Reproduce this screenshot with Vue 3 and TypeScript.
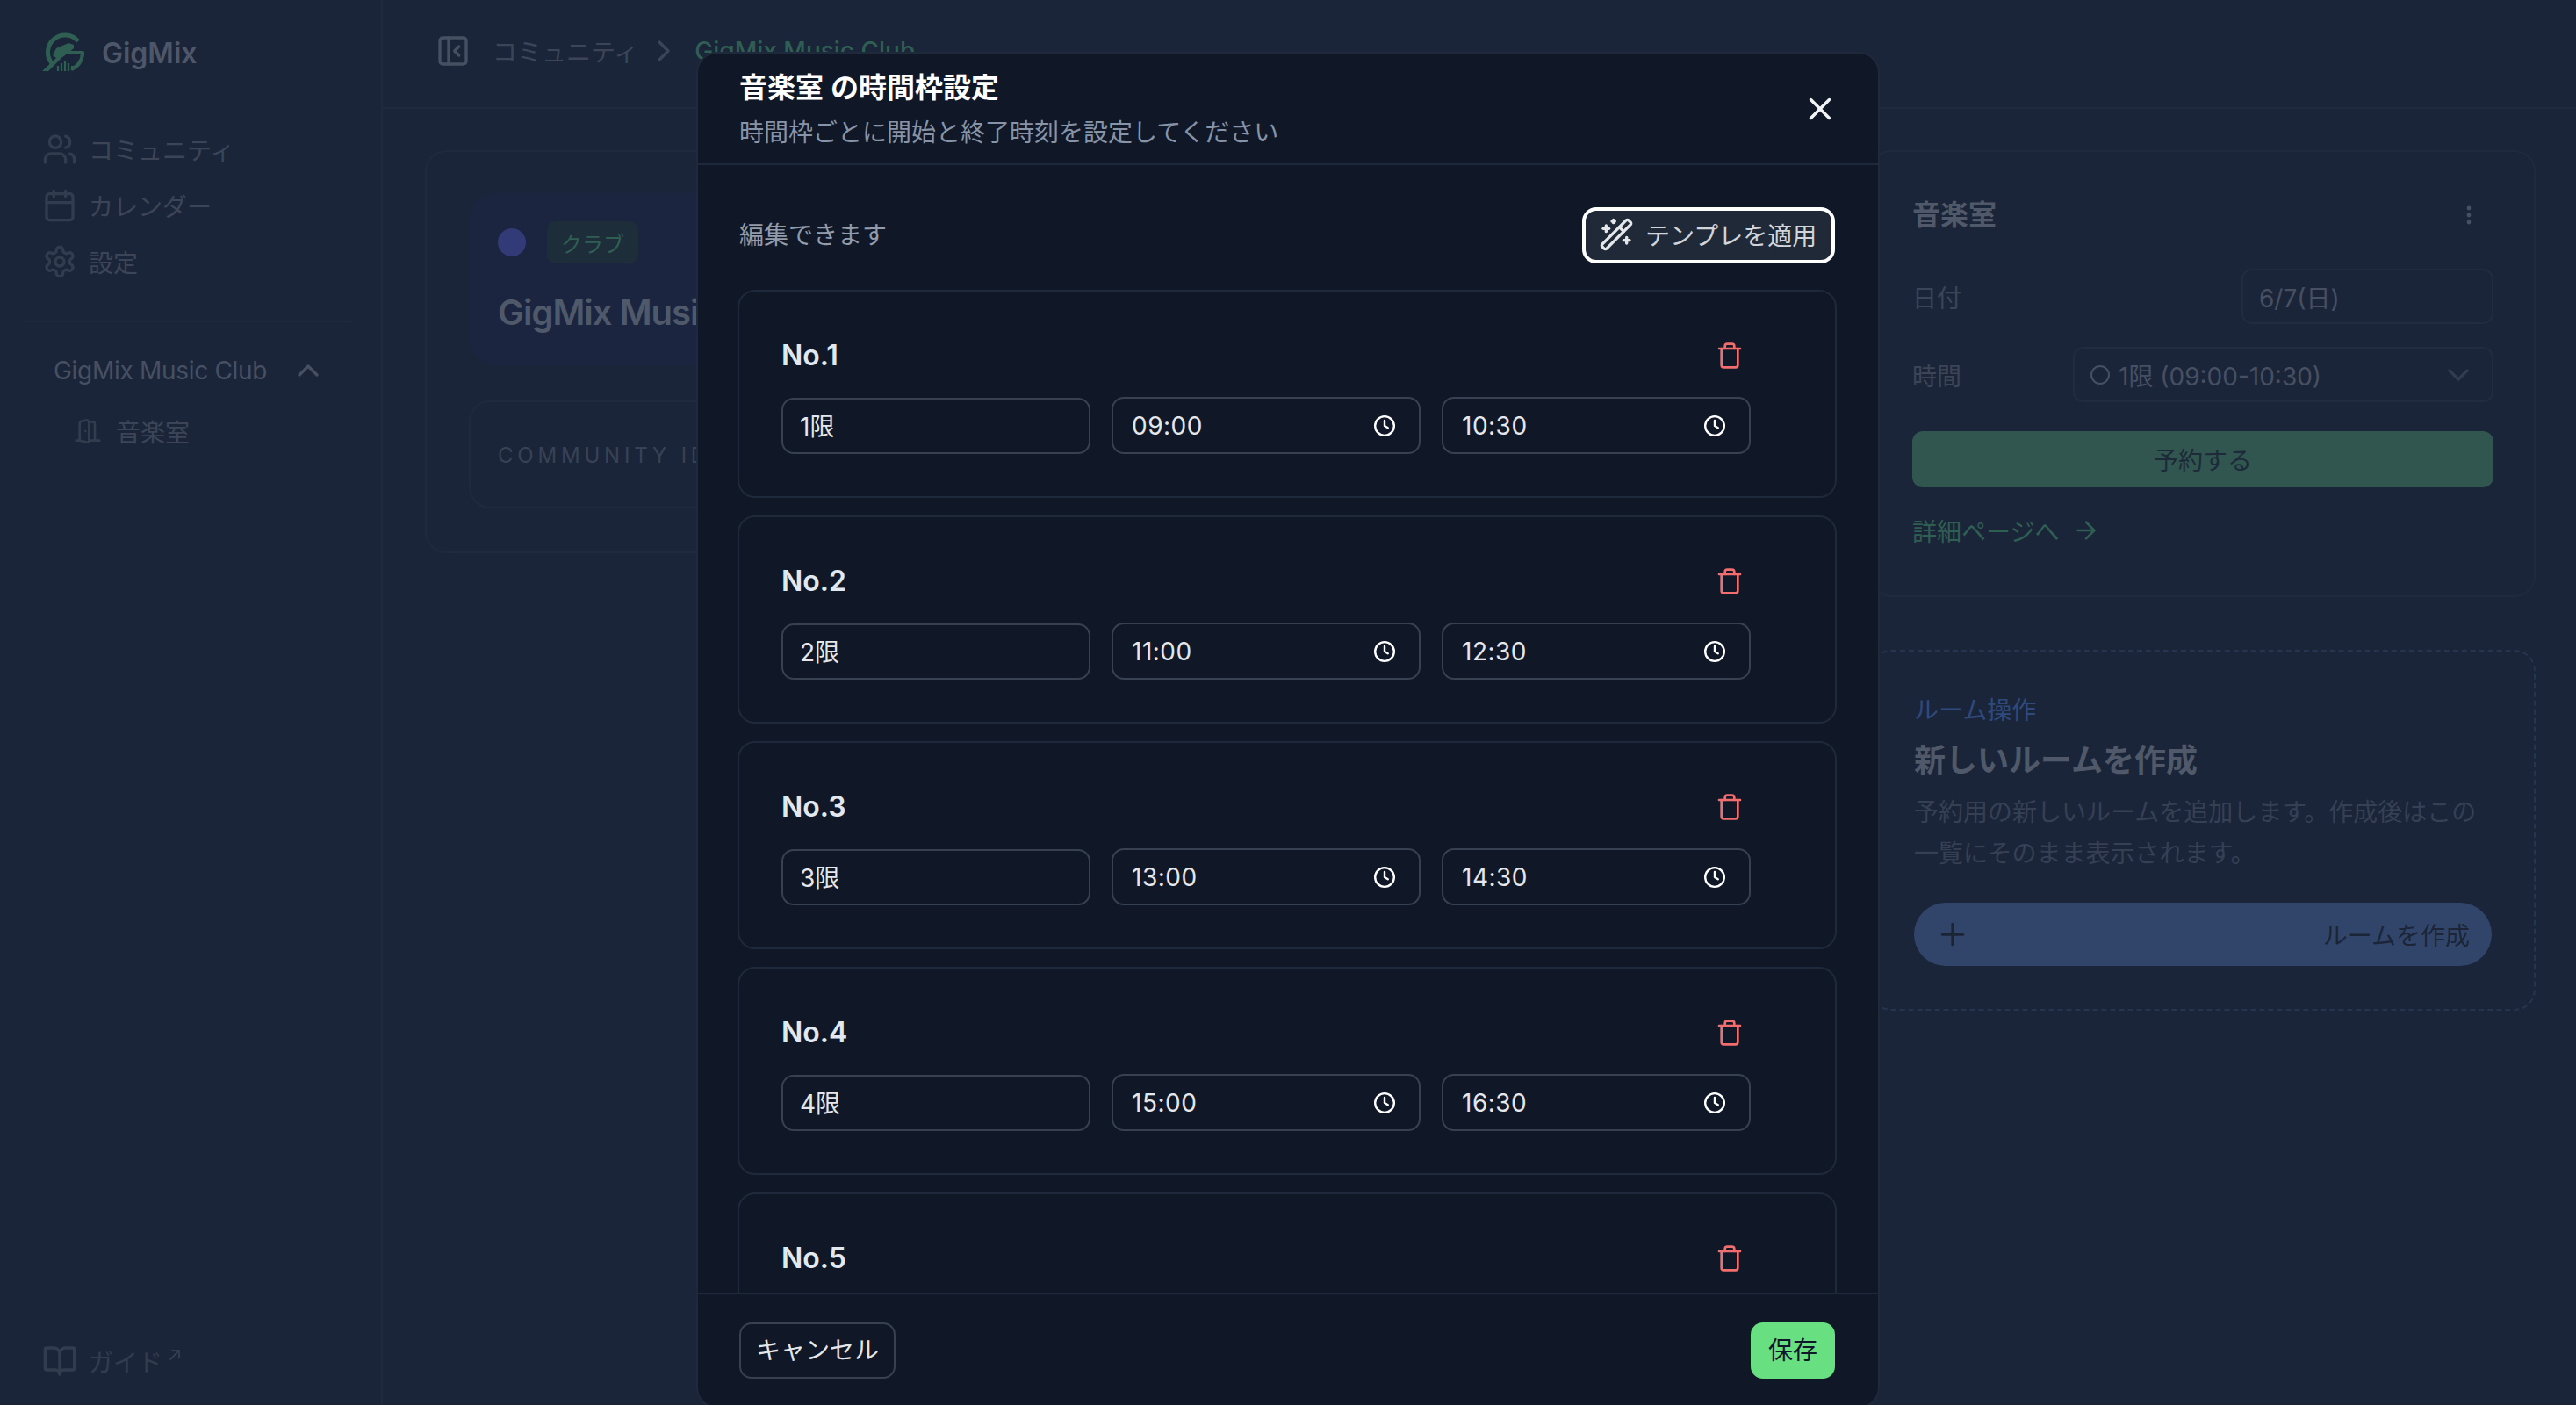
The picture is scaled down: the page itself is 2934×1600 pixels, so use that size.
<template>
  <div class="app">
    <aside class="sidebar">
      <div class="brand">
        <svg class="logo" viewBox="8 7 48 46">
          <path d="M49 17A19.5 19.5 0 1 0 19 42" fill="none" stroke="#2f5f52" stroke-width="5" stroke-linecap="butt" />
          <path d="M38 30H54A20 20 0 0 1 41 49" fill="none" stroke="#2f5f52" stroke-width="4.2" stroke-linecap="butt" />
          <path d="M8 51h7l15-15 8-6 6-5v-4l-6-2-14 6-4 8 4 3z" fill="#2f5f52" />
          <path d="M26 51v-6M30 51v-9M34 51V39M38 51v-9M42 50v-5" fill="none" stroke="#2f5f52" stroke-width="2.2" stroke-linecap="butt" />
        </svg>
        <span>GigMix</span>
      </div>
      <nav class="nav">
        <a class="nav-item">
          <svg class="ico" viewBox="0 0 24 24"><path d="M16 21v-2a4 4 0 0 0-4-4H6a4 4 0 0 0-4 4v2" /><circle cx="9" cy="7" r="4" /><path d="M22 21v-2a4 4 0 0 0-3-3.87" /><path d="M16 3.13a4 4 0 0 1 0 7.75" /></svg>
          コミュニティ
        </a>
        <a class="nav-item">
          <svg class="ico" viewBox="0 0 24 24"><path d="M8 2v4" /><path d="M16 2v4" /><rect x="3" y="4" width="18" height="18" rx="2" /><path d="M3 10h18" /></svg>
          カレンダー
        </a>
        <a class="nav-item">
          <svg class="ico" viewBox="0 0 24 24"><path d="M12.22 2h-.44a2 2 0 0 0-2 2v.18a2 2 0 0 1-1 1.73l-.43.25a2 2 0 0 1-2 0l-.15-.08a2 2 0 0 0-2.73.73l-.22.38a2 2 0 0 0 .73 2.73l.15.1a2 2 0 0 1 1 1.72v.51a2 2 0 0 1-1 1.74l-.15.09a2 2 0 0 0-.73 2.73l.22.38a2 2 0 0 0 2.73.73l.15-.08a2 2 0 0 1 2 0l.43.25a2 2 0 0 1 1 1.73V20a2 2 0 0 0 2 2h.44a2 2 0 0 0 2-2v-.18a2 2 0 0 1 1-1.73l.43-.25a2 2 0 0 1 2 0l.15.08a2 2 0 0 0 2.73-.73l.22-.39a2 2 0 0 0-.73-2.73l-.15-.08a2 2 0 0 1-1-1.74v-.5a2 2 0 0 1 1-1.74l.15-.09a2 2 0 0 0 .73-2.73l-.22-.38a2 2 0 0 0-2.73-.73l-.15.08a2 2 0 0 1-2 0l-.43-.25a2 2 0 0 1-1-1.73V4a2 2 0 0 0-2-2z" /><circle cx="12" cy="12" r="3" /></svg>
          設定
        </a>
      </nav>
      <div class="side-divider"></div>
      <div class="club-row">
        <span>GigMix Music Club</span>
        <svg class="club-chevron" viewBox="0 0 24 24"><path d="m18 15-6-6-6 6" /></svg>
      </div>
      <a class="room-link">
        <svg class="door" viewBox="0 0 24 24"><path d="M13 4h3a2 2 0 0 1 2 2v14" /><path d="M2 20h3" /><path d="M13 20h9" /><path d="M10 12v.01" /><path d="M13 4.562v16.157a1 1 0 0 1-1.242.97L5 20V5.562a2 2 0 0 1 1.515-1.94l4-1A2 2 0 0 1 13 4.561Z" /></svg>
        音楽室
      </a>
      <a class="guide">
        <svg class="ico" viewBox="0 0 24 24"><path d="M12 7v14" /><path d="M3 18a1 1 0 0 1-1-1V4a1 1 0 0 1 1-1h5a4 4 0 0 1 4 4 4 4 0 0 1 4-4h5a1 1 0 0 1 1 1v13a1 1 0 0 1-1 1h-6a3 3 0 0 0-3 3 3 3 0 0 0-3-3z" /></svg>
        ガイド
        <svg class="ext" viewBox="0 0 14 14"><path d="M2 12 12 2M4 2h8v8" /></svg>
      </a>
    </aside>

    <div class="main">
      <header class="topbar">
        <svg class="panel-ico" viewBox="0 0 24 24"><rect x="3" y="3" width="18" height="18" rx="2" /><path d="M9 3v18" /><path d="m16 15-3-3 3-3" /></svg>
        <span class="crumb">コミュニティ</span>
        <svg class="crumb-sep" viewBox="0 0 24 24"><path d="m9 18 6-6-6-6" /></svg>
        <span class="crumb-current">GigMix Music Club</span>
      </header>
      <div class="content">
        <section class="outer-card">
          <div class="hero">
            <div class="hero-top">
              <span class="dot"></span>
              <span class="badge">クラブ</span>
            </div>
            <h1>GigMix Music Club</h1>
          </div>
          <div class="id-card">COMMUNITY ID</div>
        </section>
        <div class="right-col">
          <section class="room-card">
            <div class="room-head">
              <h2>音楽室</h2>
              <svg class="kebab" viewBox="0 0 6 24"><circle cx="3" cy="4" r="2.4" /><circle cx="3" cy="12" r="2.4" /><circle cx="3" cy="20" r="2.4" /></svg>
            </div>
            <div class="field date-field">
              <label>日付</label>
              <div class="date-box">6/7(日)</div>
            </div>
            <div class="field">
              <label>時間</label>
              <div class="select-box">
                <span class="ring"></span>
                <span>1限 (09:00-10:30)</span>
                <svg class="select-chevron" viewBox="0 0 24 24"><path d="m6 9 6 6 6-6" /></svg>
              </div>
            </div>
            <div class="reserve">予約する</div>
            <a class="detail">
              詳細ページへ
              <svg class="arrow" viewBox="0 0 24 24"><path d="M5 12h14" /><path d="m12 5 7 7-7 7" /></svg>
            </a>
          </section>
          <section class="create-card">
            <div class="create-label">ルーム操作</div>
            <h3>新しいルームを作成</h3>
            <p>予約用の新しいルームを追加します。作成後はこの一覧にそのまま表示されます。</p>
            <div class="create-btn">
              <svg class="plus" viewBox="0 0 24 24"><path d="M5 12h14" /><path d="M12 5v14" /></svg>
              <span>ルームを作成</span>
            </div>
          </section>
        </div>
      </div>
    </div>

    <!-- modal -->
    <div class="modal">
      <div class="modal-head">
        <div class="modal-heading">
          <div class="modal-title">音楽室 の時間枠設定</div>
          <div class="modal-sub">時間枠ごとに開始と終了時刻を設定してください</div>
        </div>
        <svg class="close" viewBox="0 0 24 24"><path d="M18 6 6 18" /><path d="m6 6 12 12" /></svg>
      </div>
      <div class="modal-body">
        <div class="toolbar">
          <span class="editable">編集できます</span>
          <button class="template-btn">
            <svg class="wand" viewBox="0 0 24 24"><path d="m21.64 3.64-1.28-1.28a1.21 1.21 0 0 0-1.72 0L2.36 18.64a1.21 1.21 0 0 0 0 1.72l1.28 1.28a1.2 1.2 0 0 0 1.72 0L21.64 5.36a1.2 1.2 0 0 0 0-1.72" /><path d="m14 7 3 3" /><path d="M5 6v4" /><path d="M19 14v4" /><path d="M10 2v2" /><path d="M7 8H3" /><path d="M21 16h-4" /><path d="M11 3H9" /></svg>
            テンプレを適用
          </button>
        </div>
        <div v-for="slot in slots" :key="slot.no" class="slot-card">
          <div class="slot-head">
            <span class="slot-no">No.{{ slot.no }}</span>
            <svg class="trash" viewBox="0 0 24 24"><path d="M3 6h18" /><path d="M19 6v14a2 2 0 0 1-2 2H7a2 2 0 0 1-2-2V6" /><path d="M8 6V4a2 2 0 0 1 2-2h4a2 2 0 0 1 2 2v2" /></svg>
          </div>
          <!-- the fifth row is scrolled out of view, its fields are never seen -->
          <div v-if="slot.name" class="slot-inputs">
            <div class="input name">{{ slot.name }}</div>
            <div class="input time">
              <span>{{ slot.start }}</span>
              <svg class="clock" viewBox="0 0 24 24"><circle cx="12" cy="12" r="10" /><path d="M12 6.5V12l3.5 2" /></svg>
            </div>
            <div class="input time">
              <span>{{ slot.end }}</span>
              <svg class="clock" viewBox="0 0 24 24"><circle cx="12" cy="12" r="10" /><path d="M12 6.5V12l3.5 2" /></svg>
            </div>
          </div>
        </div>
      </div>
      <div class="modal-foot">
        <button class="cancel">キャンセル</button>
        <button class="save">保存</button>
      </div>
    </div>
  </div>
</template>

<script setup lang="ts">
interface Slot {
  no: number
  name: string
  start: string
  end: string
}

const slots: Slot[] = [
  { no: 1, name: '1限', start: '09:00', end: '10:30' },
  { no: 2, name: '2限', start: '11:00', end: '12:30' },
  { no: 3, name: '3限', start: '13:00', end: '14:30' },
  { no: 4, name: '4限', start: '15:00', end: '16:30' },
  { no: 5, name: '', start: '', end: '' },
]
</script>

<style>
html,
body {
  margin: 0;
  background: #1b2539;
}
</style>

<style scoped>
.app {
  position: relative;
  display: flex;
  width: 2934px;
  height: 1600px;
  overflow: hidden;
  background: #1b2539;
  font-family: Inter, "Noto Sans CJK JP", sans-serif;
  font-size: 28px;
  color: #3b4557;
}
svg {
  fill: none;
  stroke: currentColor;
  stroke-width: 2;
  stroke-linecap: round;
  stroke-linejoin: round;
  flex: none;
}

/* sidebar */
.sidebar {
  width: 436px;
  flex: none;
  box-sizing: border-box;
  display: flex;
  flex-direction: column;
  border-right: 2px solid #1f2a3e;
  padding: 0 32px 0 28px;
}
.brand {
  display: flex;
  align-items: center;
  gap: 20px;
  height: 120px;
  padding-left: 20px;
  font-size: 32px;
  font-weight: 600;
  color: #4d5769;
}
.logo {
  width: 48px;
  height: 46px;
  stroke: none;
}
.nav {
  display: flex;
  flex-direction: column;
  margin-top: 18px;
}
.nav-item {
  display: flex;
  align-items: center;
  gap: 13px;
  height: 64px;
  padding-left: 20px;
}
.ico {
  width: 40px;
  height: 40px;
  color: #323c4f;
}
.side-divider {
  height: 2px;
  background: #1f2a3e;
  margin-top: 35px;
}
.club-row {
  display: flex;
  align-items: center;
  gap: 27px;
  margin-top: 39px;
  height: 32px;
  padding-left: 33px;
  letter-spacing: -0.3px;
  color: #465062;
}
.club-chevron {
  width: 40px;
  height: 40px;
  color: #465062;
}
.room-link {
  display: flex;
  align-items: center;
  gap: 16px;
  margin-top: 37px;
  height: 32px;
  padding-left: 56px;
}
.door {
  width: 32px;
  height: 32px;
  color: #323c4f;
}
.guide {
  display: flex;
  align-items: center;
  gap: 13px;
  margin-top: auto;
  margin-bottom: 30px;
  padding-left: 20px;
  height: 40px;
  color: #323c4f;
}
.ext {
  width: 14px;
  height: 14px;
  margin: -14px 0 0 -6px;
}

/* main page behind the modal */
.main {
  flex: 1;
  min-width: 0;
}
.topbar {
  display: flex;
  align-items: center;
  box-sizing: border-box;
  height: 124px;
  border-bottom: 2px solid #1f2a3e;
  padding: 0 0 6px 60px;
}
.panel-ico {
  width: 40px;
  height: 40px;
  color: #465062;
}
.crumb {
  margin-left: 25px;
}
.crumb-sep {
  width: 40px;
  height: 40px;
  margin: 0 15px 0 9px;
  color: #3b4557;
}
.crumb-current {
  font-weight: 500;
  color: #2f5f52;
}
.content {
  display: grid;
  grid-template-columns: 1fr 758px;
  gap: 48px;
  align-items: start;
  padding: 47px 46px 0 48px;
}
.outer-card {
  box-sizing: border-box;
  height: 459px;
  border: 2px solid #1f2a3e;
  border-radius: 24px;
  padding: 47px 48px;
}
.hero {
  box-sizing: border-box;
  height: 196px;
  background: #1c2540;
  border-radius: 32px;
  padding: 32px 33px;
}
.hero-top {
  display: flex;
  align-items: center;
  gap: 24px;
}
.dot {
  width: 32px;
  height: 32px;
  border-radius: 50%;
  background: #333a78;
}
.badge {
  display: flex;
  align-items: center;
  justify-content: center;
  width: 104px;
  height: 48px;
  border-radius: 10px;
  background: #1e2d3a;
  color: #2f5f52;
  font-size: 24px;
}
h1 {
  margin: 31px 0 0;
  font-size: 40px;
  line-height: 50px;
  font-weight: 600;
  letter-spacing: -1px;
  color: #4f5969;
  white-space: nowrap;
}
.id-card {
  box-sizing: border-box;
  height: 123px;
  margin-top: 40px;
  border: 2px solid #1f2a3e;
  border-radius: 24px;
  padding: 46px 31px 0;
  font-size: 24px;
  line-height: 30px;
  letter-spacing: 0.2em;
  color: #384255;
}
.room-card {
  box-sizing: border-box;
  height: 509px;
  border: 2px solid #1f2a3e;
  border-radius: 24px;
  padding: 44px 46px;
}
.room-head {
  display: flex;
  align-items: center;
  justify-content: space-between;
  height: 50px;
  padding-right: 25px;
}
h2 {
  margin: 0;
  font-size: 32px;
  font-weight: 700;
  color: #4f5969;
}
.kebab {
  width: 6px;
  height: 24px;
  fill: #465062;
  stroke: none;
  margin-top: 6px;
}
.field {
  display: flex;
  align-items: center;
  justify-content: space-between;
  margin-top: 26px;
}
.date-field {
  margin-top: 39px;
}
.field label {
  color: #3b4557;
}
.date-box,
.select-box {
  box-sizing: border-box;
  height: 63px;
  border: 2px solid #212c41;
  border-radius: 12px;
  display: flex;
  align-items: center;
  color: #465062;
}
.date-box {
  width: 287px;
  padding-left: 18px;
}
.select-box {
  width: 479px;
  padding: 0 18px 0 18px;
  gap: 10px;
}
.ring {
  width: 22px;
  height: 22px;
  border: 2px solid #465062;
  border-radius: 50%;
  box-sizing: border-box;
}
.select-chevron {
  width: 40px;
  height: 40px;
  margin-left: auto;
  color: #323c4f;
}
.reserve {
  display: flex;
  align-items: center;
  justify-content: center;
  height: 64px;
  margin-top: 33px;
  border-radius: 12px;
  background: #31564f;
  color: #1d2a3a;
}
.detail {
  display: flex;
  align-items: center;
  gap: 15px;
  margin-top: 29px;
  color: #2f5f52;
}
.arrow {
  width: 32px;
  height: 32px;
}
.create-card {
  box-sizing: border-box;
  height: 411px;
  margin-top: 60px;
  border: 2px dashed #25344f;
  border-radius: 24px;
  padding: 50px 48px 0;
}
.create-label {
  color: #2e4a7d;
  line-height: 34px;
}
h3 {
  margin: 15px 0 0;
  font-size: 36px;
  line-height: 50px;
  font-weight: 700;
  color: #4f5969;
}
.create-card p {
  margin: 11px 0 0;
  line-height: 47px;
  color: #364054;
}
.create-btn {
  display: flex;
  align-items: center;
  justify-content: space-between;
  height: 72px;
  margin-top: 32px;
  border-radius: 36px;
  background: #31456b;
  padding: 0 25px 0 24px;
  color: #1b2537;
}
.plus {
  width: 40px;
  height: 40px;
}

/* modal */
.modal {
  position: absolute;
  left: 793px;
  top: 59px;
  width: 1348px;
  height: 1545px;
  box-sizing: border-box;
  display: flex;
  flex-direction: column;
  background: #101828;
  border: 2px solid #1e293b;
  border-radius: 24px;
  color: #e5e7eb;
}
.modal-head {
  display: flex;
  align-items: center;
  justify-content: space-between;
  box-sizing: border-box;
  height: 127px;
  flex: none;
  border-bottom: 2px solid #1e293b;
  padding: 0 45px 0 47px;
}
.modal-heading {
  padding-top: 3px;
}
.modal-title {
  font-size: 32px;
  line-height: 40px;
  font-weight: 600;
  color: #fff;
}
.modal-sub {
  margin-top: 11px;
  line-height: 40px;
  color: #8794a8;
}
.close {
  width: 42px;
  height: 42px;
  color: #f3f4f6;
}
.modal-body {
  flex: 1;
  min-height: 0;
  overflow: hidden;
  padding: 48px 47px 0 45px;
}
.toolbar {
  display: flex;
  align-items: center;
  justify-content: space-between;
  padding-left: 2px;
  margin-bottom: 30px;
}
.editable {
  color: #929cab;
  margin-top: -4px;
}
.template-btn {
  display: flex;
  align-items: center;
  gap: 13px;
  box-sizing: border-box;
  width: 288px;
  height: 64px;
  padding: 0 0 2px 15px;
  background: #1f2937;
  border: 4px solid #fff;
  border-radius: 16px;
  font: inherit;
  color: #d1d5db;
  margin-right: 2px;
}
.wand {
  width: 40px;
  height: 40px;
  color: #e5e7eb;
}
.slot-card {
  box-sizing: border-box;
  height: 237px;
  margin-bottom: 20px;
  border: 2px solid #1e293b;
  border-radius: 20px;
  padding: 48px 96px 48px 48px;
}
.slot-head {
  display: flex;
  align-items: center;
  justify-content: space-between;
  height: 49px;
  margin-bottom: 23px;
  padding-right: 8px;
}
.slot-no {
  font-size: 32px;
  font-weight: 600;
  color: #e2e8f0;
}
.trash {
  width: 32px;
  height: 32px;
  color: #f26d6d;
}
.slot-inputs {
  display: grid;
  grid-template-columns: repeat(3, 1fr);
  gap: 24px;
  align-items: end;
}
.input {
  box-sizing: border-box;
  height: 64px;
  display: flex;
  align-items: center;
  justify-content: space-between;
  border: 2px solid #374151;
  border-radius: 14px;
  padding: 0 19px;
  color: #e5e7eb;
}
.input.name {
  padding-bottom: 2px;
}
.input.time {
  height: 65px;
  padding: 0 26px 0 21px;
  letter-spacing: 0.5px;
}
.clock {
  width: 26px;
  height: 26px;
  color: #fff;
  stroke-width: 2.2;
}
.modal-foot {
  display: flex;
  align-items: center;
  justify-content: space-between;
  flex: none;
  box-sizing: border-box;
  height: 130px;
  border-top: 2px solid #1e293b;
  padding: 0 49px 0 47px;
}
.modal-foot button {
  height: 64px;
  border-radius: 14px;
  font: inherit;
  padding: 0 0 4px;
}
.cancel {
  width: 178px;
  background: transparent;
  border: 2px solid #374151;
  color: #e5e7eb;
}
.save {
  width: 96px;
  background: #68df80;
  border: none;
  color: #0f172a;
}
</style>
